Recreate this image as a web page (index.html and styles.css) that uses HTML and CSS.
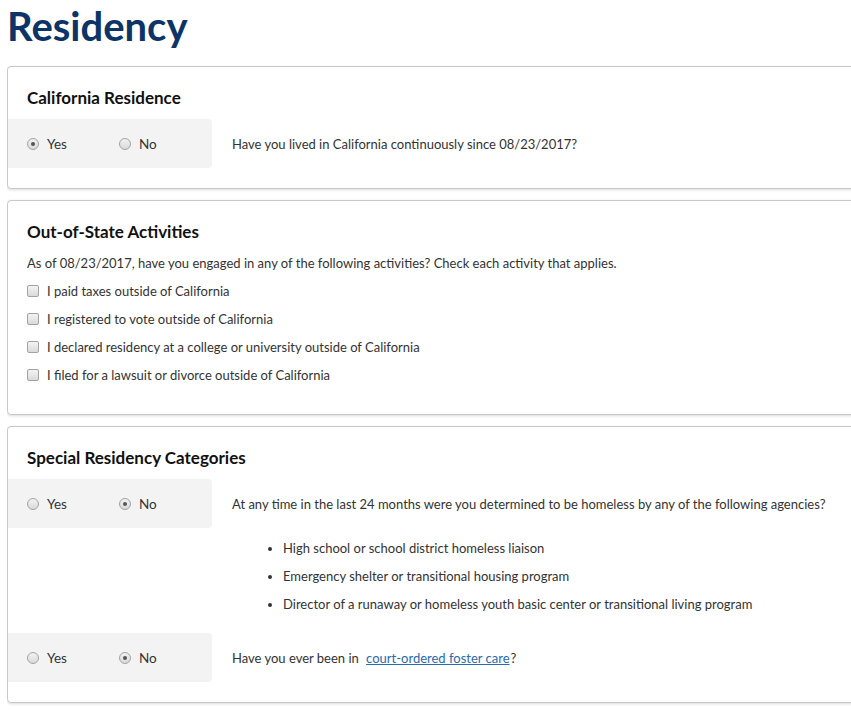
FILE: index.html
```html
<!DOCTYPE html>
<html lang="en">
<head>
  <meta charset="UTF-8">
  <title>Residency</title>
  <link rel="stylesheet" href="styles.css">
</head>
<body>
  <h1 class="page-title">Residency</h1>

  <!-- California Residence -->
  <section class="card">
    <h2 class="card-title">California Residence</h2>
    <div class="answer-row">
      <div class="options">
        <label class="option"><span class="radio checked"></span>Yes</label>
        <label class="option"><span class="radio"></span>No</label>
      </div>
      <p class="question">Have you lived in California continuously since 08/23/2017?</p>
    </div>
  </section>

  <!-- Out-of-State Activities -->
  <section class="card card-activities">
    <h2 class="card-title">Out-of-State Activities</h2>
    <p class="card-text">As of 08/23/2017, have you engaged in any of the following activities? Check each activity that applies.</p>
    <label class="check-row"><span class="checkbox"></span>I paid taxes outside of California</label>
    <label class="check-row"><span class="checkbox"></span>I registered to vote outside of California</label>
    <label class="check-row"><span class="checkbox"></span>I declared residency at a college or university outside of California</label>
    <label class="check-row"><span class="checkbox"></span>I filed for a lawsuit or divorce outside of California</label>
  </section>

  <!-- Special Residency Categories -->
  <section class="card">
    <h2 class="card-title">Special Residency Categories</h2>
    <div class="answer-row">
      <div class="options">
        <label class="option"><span class="radio"></span>Yes</label>
        <label class="option"><span class="radio checked"></span>No</label>
      </div>
      <p class="question">At any time in the last 24 months were you determined to be homeless by any of the following agencies?</p>
    </div>
    <ul class="agency-list">
      <li>High school or school district homeless liaison</li>
      <li>Emergency shelter or transitional housing program</li>
      <li>Director of a runaway or homeless youth basic center or transitional living program</li>
    </ul>
    <div class="answer-row">
      <div class="options">
        <label class="option"><span class="radio"></span>Yes</label>
        <label class="option"><span class="radio checked"></span>No</label>
      </div>
      <p class="question">Have you ever been in <a href="#" class="link">court-ordered foster care</a>?</p>
    </div>
  </section>
</body>
</html>
```

FILE: styles.css
```css
/* Global */
html, body {
  overflow: hidden;
}

body {
  margin: 0 0 0 7px;
  font-family: Lato, 'Liberation Sans', sans-serif;
  font-size: 13px;
  color: #333;
  background: #fff;
}

.page-title {
  margin: 0 0 10px;
  padding-top: 3px;
  height: 53px;
  font-size: 40px;
  line-height: 46px;
  font-weight: bold;
  color: #0c3466;
}

/* Cards */
.card {
  width: 900px;
  margin: 0 0 11px;
  padding: 19px 19px 20px;
  background: #fff;
  border: 1px solid #c9c9c9;
  border-radius: 4px;
  box-shadow: 0 1px 3px rgba(0, 0, 0, 0.15);
}

.card-activities {
  padding-bottom: 25px;
}

.card-title {
  margin: 0 0 9px;
  font-size: 17px;
  line-height: 24px;
  font-weight: bold;
  color: #111;
}

.card-text {
  margin: 0 0 4px;
  line-height: 20px;
}

/* Yes / No rows */
.answer-row {
  display: flex;
  align-items: center;
  margin-left: -19px;
}

.options {
  display: flex;
  align-items: center;
  width: 185px;
  height: 49px;
  padding-left: 19px;
  background: #f3f3f3;
  border-radius: 0 4px 4px 0;
}

.option {
  display: flex;
  align-items: center;
  width: 92px;
  font-size: 13.5px;
}

.radio {
  width: 10px;
  height: 10px;
  margin-right: 8px;
  border: 1px solid #a3a3a3;
  border-radius: 50%;
  background: linear-gradient(#f2f2f2, #d9d9d9);
  position: relative;
}

.radio.checked::after {
  content: '';
  position: absolute;
  top: 3px;
  left: 3px;
  width: 4px;
  height: 4px;
  border-radius: 50%;
  background: #555;
}

.question {
  margin: 0 0 0 20px;
  line-height: 20px;
  white-space: nowrap;
}

.link {
  color: #2a6aad;
  margin: 0 1px 0 4px;
}

/* Checkboxes */
.check-row {
  display: flex;
  align-items: center;
  height: 28px;
}

.checkbox {
  width: 10px;
  height: 10px;
  margin-right: 8px;
  border: 1px solid #a3a3a3;
  border-radius: 2px;
  background: linear-gradient(#f4f4f4, #dadada);
}

/* Agency list */
.agency-list {
  margin: 6px 0 15px;
  padding-left: 256px;
}

.agency-list li {
  line-height: 28px;
}
```
